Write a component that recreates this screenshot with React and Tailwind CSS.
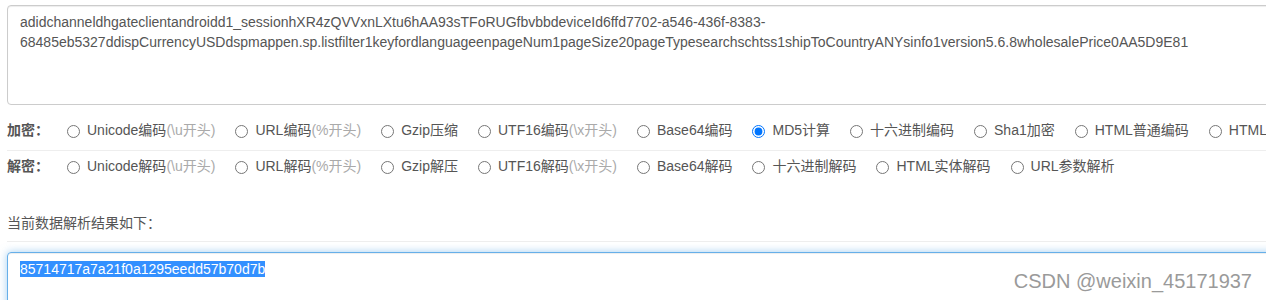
import { useState } from "react";

const encodeOptions = [
  { label: "Unicode编码", hint: "(\\u开头)" },
  { label: "URL编码", hint: "(%开头)" },
  { label: "Gzip压缩" },
  { label: "UTF16编码", hint: "(\\x开头)" },
  { label: "Base64编码" },
  { label: "MD5计算" },
  { label: "十六进制编码" },
  { label: "Sha1加密" },
  { label: "HTML普通编码" },
  { label: "HTML实体编码" },
];

const decodeOptions = [
  { label: "Unicode解码", hint: "(\\u开头)" },
  { label: "URL解码", hint: "(%开头)" },
  { label: "Gzip解压" },
  { label: "UTF16解码", hint: "(\\x开头)" },
  { label: "Base64解码" },
  { label: "十六进制解码" },
  { label: "HTML实体解码" },
  { label: "URL参数解析" },
];

const input =
  "adidchanneldhgateclientandroidd1_sessionhXR4zQVVxnLXtu6hAA93sTFoRUGfbvbbdeviceId6ffd7702-a546-436f-8383-68485eb5327ddispCurrencyUSDdspmappen.sp.listfilter1keyfordlanguageenpageNum1pageSize20pageTypesearchschtss1shipToCountryANYsinfo1version5.6.8wholesalePrice0AA5D9E81";

function OptionRow({ title, options, selected, onSelect, bordered }) {
  return (
    <div className={`flex items-start whitespace-nowrap ${bordered ? "border-b border-[#eeeeee] pb-[10px]" : "pt-[5px]"}`}>
      <span className="w-[60px] shrink-0 font-bold leading-5 text-[#555]">{title}</span>
      <div className="flex items-start gap-x-[20px]">
        {options.map((opt) => (
          <label key={opt.label} className="flex shrink-0 cursor-pointer items-start gap-[7px] leading-5">
            <input
              type="radio"
              name={title}
              className="m-0 mt-[5px] h-[13px] w-[13px] shrink-0"
              checked={selected === opt.label}
              onChange={() => onSelect(opt.label)}
            />
            <span className="text-[#555]">
              {opt.label}
              {opt.hint && <span className="text-[#aaa]">{opt.hint}</span>}
            </span>
          </label>
        ))}
      </div>
    </div>
  );
}

export default function App() {
  const [selected, setSelected] = useState("MD5计算");

  return (
    <div
      className="relative h-[300px] w-full overflow-hidden bg-white text-[14px]"
      style={{ fontFamily: '"Liberation Sans", Arial, "Noto Sans CJK SC", sans-serif' }}
    >
      <div className="w-[1320px] pl-[7px] pt-[5px]">
        <div className="h-[100px] rounded-[4px] border border-[#ccc] px-[12px] py-[6px] leading-5 text-[#555] shadow-[inset_0_1px_1px_rgba(0,0,0,0.075)]">
          {input}
        </div>

        <div className="mt-[15px]">
          <OptionRow title="加密：" options={encodeOptions} selected={selected} onSelect={setSelected} bordered />
          <OptionRow title="解密：" options={decodeOptions} selected={selected} onSelect={setSelected} />
        </div>

        <div className="mt-[37px] border-b border-[#eeeeee] pb-[8px] leading-5 text-[#555]">当前数据解析结果如下：</div>

        <div className="mt-[10px] h-[100px] rounded-[4px] border border-[#66afe9] px-[12px] py-[6px] leading-5 shadow-[inset_0_1px_1px_rgba(0,0,0,0.075),0_0_8px_rgba(102,175,233,0.6)]">
          <span className="bg-[#3390ff] text-white">85714717a7a21f0a1295eedd57b70d7b</span>
        </div>
      </div>

      <div className="pointer-events-none absolute bottom-[7px] right-[14px] text-[20px] leading-6 text-[#9a9a9a] [text-shadow:0_0_2px_#fff,0_0_2px_#fff]">
        CSDN @weixin_45171937
      </div>
    </div>
  );
}
